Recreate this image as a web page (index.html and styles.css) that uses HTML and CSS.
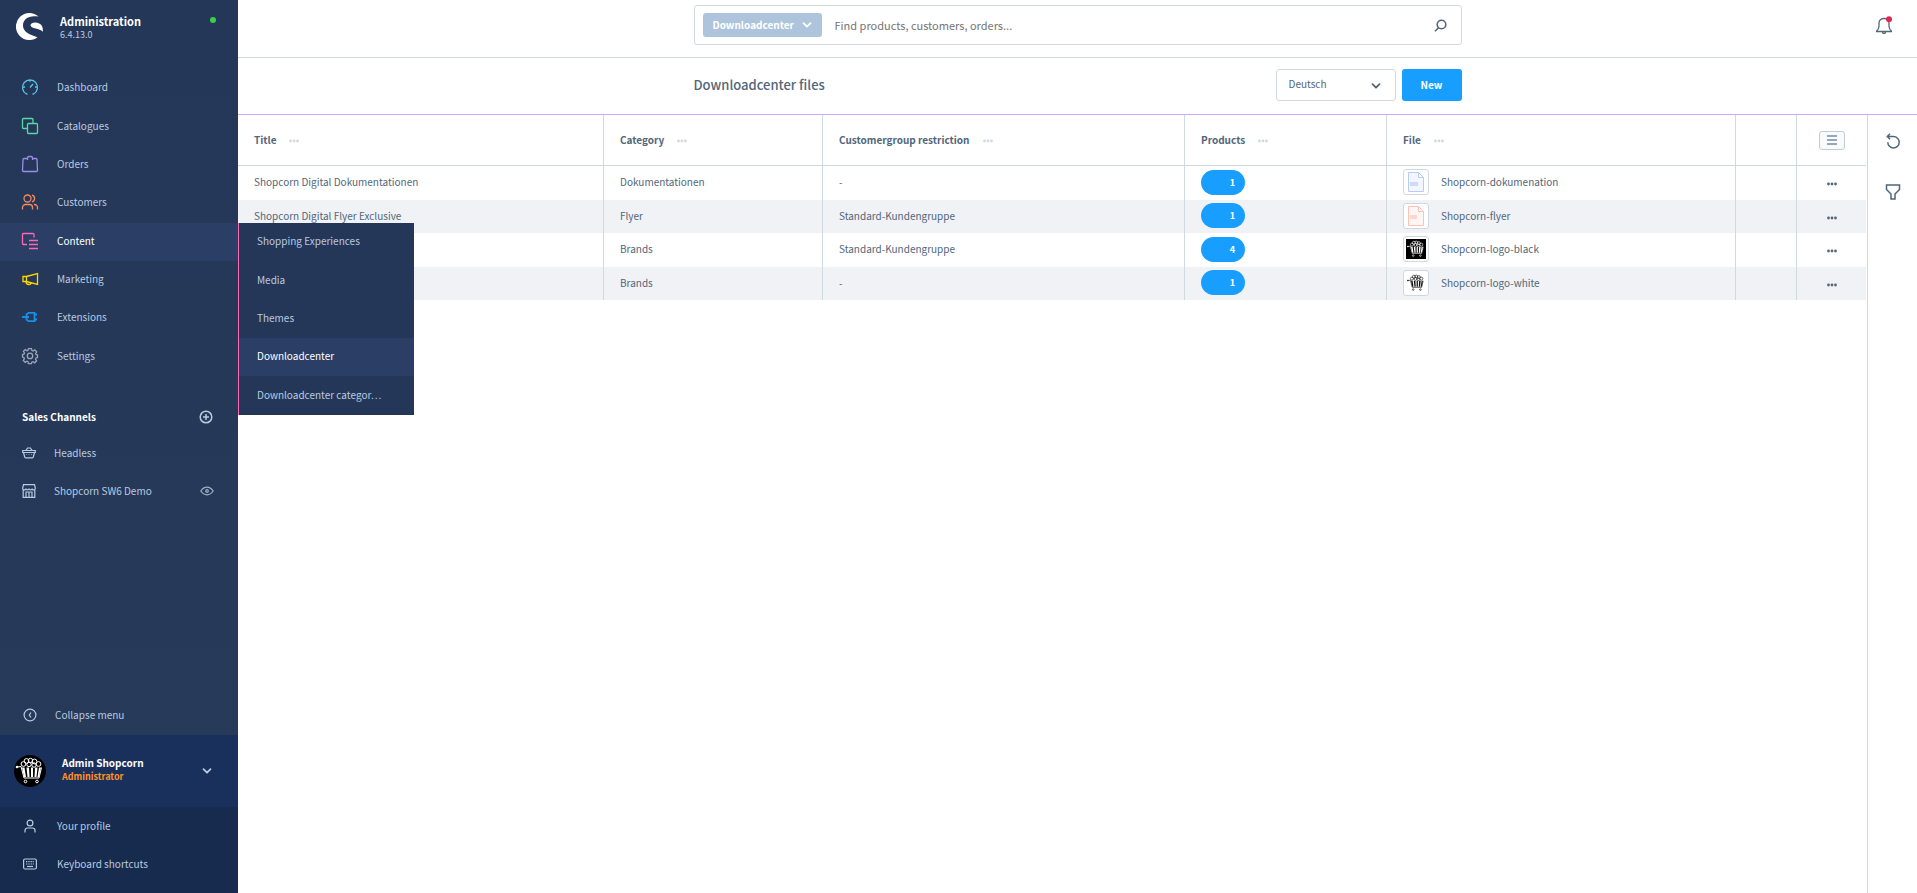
FILE: index.html
```html
<!DOCTYPE html>
<html lang="en">
<head>
<meta charset="utf-8">
<title>Downloadcenter files | Administration</title>
<link rel="stylesheet" href="styles.css">
</head>
<body>
<svg class="defs" aria-hidden="true">
  <symbol id="cart" viewBox="0 0 32 32">
    <g fill="none" stroke="currentColor" stroke-width="1">
      <circle cx="9.500" cy="9" r="2.400"/><circle cx="12.500" cy="6" r="2.400"/><circle cx="16.500" cy="5.500" r="2.200"/><circle cx="20.500" cy="6.500" r="2.400"/><circle cx="24.500" cy="9" r="2.400"/><circle cx="15" cy="9.500" r="2.200"/><circle cx="20" cy="10" r="2.200"/>
      <path d="M3 12l4-.5 3 11.500h15l2.500-10.500"/>
      <circle cx="11.500" cy="26.500" r="1.300"/><circle cx="23" cy="26.500" r="1.300"/>
    </g>
    <path d="M8 12.500h2.500l1.500 9.500h-2zM12.500 12.500h2.500l.5 9.500h-2zM17 12.500h2v9.500h-2zM21 12.500h2.500l-1 9.500h-2zM25 12.500h2l-2 9.500h-1.500z" fill="currentColor"/>
    <circle cx="3" cy="12" r="1.300" fill="currentColor"/>
  </symbol>
  <symbol id="chevron" viewBox="0 0 10 10"><path d="M1.500 3.200L5 6.700l3.500-3.500" fill="none" stroke="currentColor" stroke-width="1.800" stroke-linecap="round" stroke-linejoin="round"/></symbol>
  <symbol id="dots" viewBox="0 0 10 4"><g fill="currentColor"><circle cx="1.500" cy="2" r="1.400"/><circle cx="5" cy="2" r="1.400"/><circle cx="8.500" cy="2" r="1.400"/></g></symbol>
</svg>
<div class="app">
  <aside class="sidebar">
    <header class="brand">
      <svg class="brand-logo" viewBox="0 0 27 27"><path d="M22.500 3.600A13.500 13.500 0 1 0 21.400 24.400C18.500 22.600 7.200 21 7 12.500 6.900 6 13 1.800 22.500 3.600z" fill="#fff"/><path d="M14.500 12.300c0-3 5.500-3.800 9.200-1.600 2.600 1.500 3.600 4.500 3 8-2.700-3.300-12.200-3-12.200-6.400z" fill="#fff"/></svg>
      <div class="brand-text"><strong>Administration</strong><span>6.4.13.0</span></div>
      <i class="status"></i>
    </header>
    <nav class="menu">
      <a href="#"><svg viewBox="0 0 16 16" class="c-cyan"><path d="M5.500 15H4.500A7.500 7.500 0 1 1 11.500 15H10.500M8 .8v2M1 8h2M13 8h2M8 8.500L11 5"/></svg>Dashboard</a>
      <a href="#"><svg viewBox="0 0 16 16" class="c-green"><path d="M5.500 10.500h-4a1 1 0 0 1-1-1v-8a1 1 0 0 1 1-1h8.500a1 1 0 0 1 1 1v4"/><rect x="5.500" y="5.500" width="10" height="10" rx="1"/></svg>Catalogues</a>
      <a href="#"><svg viewBox="0 0 16 16" class="c-purple"><path d="M5.500 2.500h-3.500a1 1 0 0 0-1 1L.5 14.500a1 1 0 0 0 1 1h13a1 1 0 0 0 1-1L15 3.500a1 1 0 0 0-1-1h-3.500M5.500 4V2a1.500 1.500 0 0 1 1.500-1.500h2A1.500 1.500 0 0 1 10.500 2v2"/></svg>Orders</a>
      <a href="#"><svg viewBox="0 0 16 16" class="c-orange"><circle cx="5.500" cy="4.500" r="3.500"/><path d="M.5 15.500v-2a3 3 0 0 1 3-3h4a3 3 0 0 1 3 3v2M10 1.200a3.400 3.400 0 0 1 0 6.600M12 10.500h.5a3 3 0 0 1 3 3v2"/></svg>Customers</a>
      <a href="#" class="active"><svg viewBox="0 0 16 16" class="c-pink"><path d="M5 11.500H1.500a1 1 0 0 1-1-1v-9a1 1 0 0 1 1-1H11a1 1 0 0 1 1 1v3M7 7.500h9M7 11.500h9M7 15.500h9"/></svg>Content</a>
      <a href="#"><svg viewBox="0 0 16 16" class="c-yellow"><path d="M1 5.500h3.500L15.500 2.500v11L4.500 10.500H1zM4.500 5.500v5M4 10.500c0 2 1 3 3 3 1 0 2-.7 2-1.700"/></svg>Marketing</a>
      <a href="#"><svg viewBox="0 0 16 16" class="c-blue"><path d="M0 8h6M12 5.500h3M12 10.500h3M4.500 8h2.500" stroke-width="1.800"/><path d="M12.500 3.800H6.500L4.500 5.500v5L6.500 12.200h6z" stroke-width="1.800"/></svg>Extensions</a>
      <a href="#"><svg viewBox="0 0 16 16" class="c-grey"><path d="M6.500.6h3l.4 1.900 1.200.5 1.700-1.100 1.900 1.900-1.100 1.700.5 1.100 1.400.4v2.500l-1.500.5-.5 1.200 1.100 1.700-1.900 1.900-1.700-1.100-1.200.5-.3 1.400H6.400L6 13.700l-1.100-.5-1.700 1.100-1.900-1.900 1.100-1.700-.5-1.200L.5 9V6.500l1.500-.4.500-1.100-1.100-1.700L3.200 1.600l1.700 1.100L6 2.200z"/><circle cx="8" cy="7.900" r="2.700"/></svg>Settings</a>
      <div class="flyout">
        <a href="#">Shopping Experiences</a>
        <a href="#">Media</a>
        <a href="#">Themes</a>
        <a href="#" class="active">Downloadcenter</a>
        <a href="#">Downloadcenter categor…</a>
      </div>
    </nav>
    <section class="channels">
      <div class="channels-head"><h2>Sales Channels</h2><button type="button" aria-label="Add sales channel"><svg viewBox="0 0 14 14"><circle cx="7" cy="7" r="5.800"/><path d="M7 4v6M4 7h6"/></svg></button></div>
      <a href="#"><svg viewBox="0 0 14 14"><path d="M.7 4.500h12.600v2H.7zM1.500 6.500l1.200 4.500a1 1 0 0 0 1 .8h6.600a1 1 0 0 0 1-.8l1.200-4.500M4 4.500l1.500-2.500h3L10 4.500M4.500 8.500h.6M6.700 8.500h.6M9 8.500h.6"/></svg>Headless</a>
      <a href="#"><svg viewBox="0 0 14 14"><path d="M1.200 6v7.300h11.600V6M1.500.7h11l.8 3.300a1.600 1.600 0 0 1-3.200.6 1.600 1.600 0 0 1-3.100 0 1.600 1.600 0 0 1-3.100 0A1.600 1.600 0 0 1 .7 4zM4 13V8h6V13M7 8V13"/></svg>Shopcorn SW6 Demo<svg class="eye" viewBox="0 0 14 14"><path d="M.8 7C2.500 4.500 4.500 3.200 7 3.200S11.500 4.500 13.200 7C11.500 9.500 9.500 10.800 7 10.800S2.500 9.500.8 7z"/><circle cx="7" cy="7" r="1.300"/></svg></a>
    </section>
    <button type="button" class="collapse"><svg viewBox="0 0 14 14"><circle cx="7" cy="7" r="5.900"/><path d="M8 4.500L6.300 7 8 9.500"/></svg>Collapse menu</button>
    <button type="button" class="user"><span class="avatar"><svg><use href="#cart"/></svg></span><span class="user-text"><strong>Admin Shopcorn</strong><em>Administrator</em></span><svg class="user-chevron"><use href="#chevron"/></svg></button>
    <nav class="user-menu">
      <a href="#"><svg viewBox="0 0 14 14"><circle cx="7" cy="4" r="2.900"/><path d="M2 13.500v-2a2.500 2.500 0 0 1 2.500-2.500h5a2.500 2.500 0 0 1 2.500 2.500v2"/></svg>Your profile</a>
      <a href="#"><svg viewBox="0 0 14 14"><rect x=".6" y="2" width="12.800" height="10" rx="1.500"/><path d="M3 4.700h8M3 7h8" stroke-dasharray="1 .7"/><path d="M4 9.500h6"/></svg>Keyboard shortcuts</a>
    </nav>
  </aside>
  <div class="desktop">
    <header class="topbar">
      <div class="search">
        <button type="button" class="scope">Downloadcenter<svg><use href="#chevron"/></svg></button>
        <input type="text" aria-label="Search" placeholder="Find products, customers, orders...">
        <svg class="search-icon" viewBox="0 0 13 13"><circle cx="7.500" cy="5.500" r="4.300"/><path d="M4.500 8.700L1 12.200"/></svg>
      </div>
      <button type="button" class="bell" aria-label="Notifications"><svg viewBox="0 0 18 18"><path d="M1 15.500h16M1.500 15c2-1.500 2.500-3 2.500-5V7a4.500 4.500 0 0 1 4.500-4.500h1A4.500 4.500 0 0 1 14 7v3c0 2 .5 3.500 2.500 5M7.500 16a1.500 1.500 0 0 0 3 0" fill="none" stroke="#52667a" stroke-width="1.300"/><circle cx="14" cy="3.300" r="3" fill="#de294c"/></svg></button>
    </header>
    <header class="pagebar">
      <div class="pagebar-inner">
        <h1>Downloadcenter files</h1>
        <label class="language"><select aria-label="Language"><option>Deutsch</option></select><svg><use href="#chevron"/></svg></label>
        <button type="button" class="primary">New</button>
      </div>
    </header>
    <div class="content">
      <main class="grid-wrap">
        <table class="grid">
          <colgroup><col class="w-title"><col class="w-category"><col class="w-group"><col class="w-products"><col class="w-file"><col class="w-empty"><col class="w-actions"></colgroup>
          <thead>
            <tr>
              <th>Title<svg class="dots"><use href="#dots"/></svg></th>
              <th>Category<svg class="dots"><use href="#dots"/></svg></th>
              <th>Customergroup restriction<svg class="dots"><use href="#dots"/></svg></th>
              <th>Products<svg class="dots"><use href="#dots"/></svg></th>
              <th>File<svg class="dots"><use href="#dots"/></svg></th>
              <th></th>
              <th class="actions"><button type="button" class="columns" aria-label="Columns"><svg viewBox="0 0 10 10"><path d="M0 1h10M0 5h10M0 9h10" stroke="#758ca3" stroke-width="1.300"/></svg></button></th>
            </tr>
          </thead>
          <tbody>
            <tr>
              <td>Shopcorn Digital Dokumentationen</td><td>Dokumentationen</td><td>-</td><td><span class="badge">1</span></td>
              <td><div class="file"><span class="thumb"><svg class="doc" viewBox="0 0 16 20"><path d="M.5.500h10l5 5v14H.5zM10.500.5v5h5"/><rect x="2" y="10" width="8" height="4"/></svg></span>Shopcorn-dokumenation</div></td>
              <td></td><td class="actions"><button type="button" aria-label="Row actions"><svg class="dots"><use href="#dots"/></svg></button></td>
            </tr>
            <tr>
              <td>Shopcorn Digital Flyer Exclusive</td><td>Flyer</td><td>Standard-Kundengruppe</td><td><span class="badge">1</span></td>
              <td><div class="file"><span class="thumb"><svg class="doc pdf" viewBox="0 0 16 20"><path d="M.5.500h10l5 5v14H.5zM10.500.5v5h5"/><rect x="2" y="9" width="7" height="4"/></svg></span>Shopcorn-flyer</div></td>
              <td></td><td class="actions"><button type="button" aria-label="Row actions"><svg class="dots"><use href="#dots"/></svg></button></td>
            </tr>
            <tr>
              <td></td><td>Brands</td><td>Standard-Kundengruppe</td><td><span class="badge">4</span></td>
              <td><div class="file"><span class="thumb"><svg class="logo dark"><use href="#cart"/></svg></span>Shopcorn-logo-black</div></td>
              <td></td><td class="actions"><button type="button" aria-label="Row actions"><svg class="dots"><use href="#dots"/></svg></button></td>
            </tr>
            <tr>
              <td></td><td>Brands</td><td>-</td><td><span class="badge">1</span></td>
              <td><div class="file"><span class="thumb"><svg class="logo"><use href="#cart"/></svg></span>Shopcorn-logo-white</div></td>
              <td></td><td class="actions"><button type="button" aria-label="Row actions"><svg class="dots"><use href="#dots"/></svg></button></td>
            </tr>
          </tbody>
        </table>
      </main>
      <aside class="tools">
        <button type="button" aria-label="Refresh"><svg viewBox="0 0 16 16"><path d="M2.500 3.500h6a5.700 5.700 0 1 1-5.700 5.700M5 .8L2.300 3.500 5 6.200"/></svg></button>
        <button type="button" aria-label="Filter"><svg viewBox="0 0 16 16"><path d="M1.500 1h13v4.500L10 10v5H6v-5L1.500 5.500z"/></svg></button>
      </aside>
    </div>
  </div>
</div>
</body>
</html>
```
FILE: styles.css
```css
* { box-sizing: border-box; }
body, h1, h2 { margin: 0; }
body, button, input, select {
  font-family: "Noto Sans CJK SC", "Noto Sans", sans-serif;
  font-size: 10px;
  line-height: 16px;
}
body { color: #52667a; background: #fff; }
button { padding: 0; border: 0; background: none; color: inherit; cursor: pointer; }
a { color: inherit; text-decoration: none; }
.defs { position: absolute; width: 0; height: 0; }
.app { display: flex; min-height: 100vh; }

.sidebar {
  display: flex;
  flex-direction: column;
  flex: 0 0 238px;
  background: linear-gradient(#243758, #273a58);
  color: #b9cbe0;
}
.brand { display: flex; align-items: flex-start; gap: 17px; padding: 13px 22px 0 16px; height: 69px; }
.brand-logo { width: 27px; height: 27px; }
.brand-text { display: flex; flex-direction: column; flex: 1; }
.brand-text strong { font-size: 11px; color: #fff; }
.brand-text span { font-size: 9px; line-height: 12px; }
.status { width: 6px; height: 6px; margin-top: 4px; border-radius: 50%; background: #37d046; }

.menu { position: relative; display: flex; flex-direction: column; height: 307px; }
.menu > a { flex: 1; display: flex; align-items: center; gap: 19px; padding: 0 0 2px 22px; }
.menu svg { width: 16px; height: 16px; fill: none; stroke: currentColor; stroke-width: 1.3; overflow: visible; }
.menu a.active { background: #2b3f66; color: #fff; }
.menu .c-cyan { color: #5cc8e8; }
.menu .c-green { color: #57d9a3; }
.menu .c-purple { color: #9a8cf0; }
.menu .c-orange { color: #f88962; }
.menu .c-pink { color: #ff68b4; }
.menu .c-yellow { color: #ffd700; }
.menu .c-blue { color: #1b8ee6; }
.menu .c-grey { color: #9aa8b5; }
.flyout {
  position: absolute;
  z-index: 2;
  top: 50%;
  left: 100%;
  display: flex;
  flex-direction: column;
  width: 176px;
  height: 192px;
  border-left: 1px solid #ff68b4;
  background: #243758;
}
.flyout a { flex: 1; display: flex; align-items: center; padding: 0 0 1px 18px; }

.channels { display: flex; flex-direction: column; padding: 22px 24px 0 22px; }
.channels svg, .collapse svg, .user-menu svg { width: 14px; height: 14px; fill: none; stroke: currentColor; stroke-width: 1.2; }
.channels-head { display: flex; align-items: center; justify-content: space-between; height: 38px; padding-right: 1px; }
.channels-head h2 { font-size: 10px; color: #fff; }
.channels-head button { display: flex; }
.channels .channels-head svg { stroke-width: 1.5; }
.channels a { display: flex; align-items: center; gap: 18px; height: 38px; margin-top: -2px; }
.channels a + a { margin-top: 0; }
.channels .eye { margin-left: auto; color: #9fb2c8; }
.collapse { display: flex; align-items: center; gap: 18px; height: 40px; margin-top: auto; padding-left: 23px; }
.user { display: flex; align-items: center; gap: 16px; height: 72px; padding: 0 26px 0 14px; background: #1a305c; text-align: left; }
.avatar { width: 32px; height: 32px; border-radius: 50%; background: #000; color: #fff; }
.avatar svg { display: block; width: 32px; height: 32px; }
.user-text { display: flex; flex-direction: column; flex: 1; padding-bottom: 2px; }
.user-text strong { line-height: 14px; font-size: 10px; color: #fff; }
.user-text em { font-style: normal; font-weight: 700; font-size: 9px; line-height: 14px; color: #ff9127; }
.user-chevron { width: 10px; height: 10px; }
.user-menu { padding-bottom: 10px; background: #172b4e; }
.user-menu a { display: flex; align-items: center; gap: 20px; height: 38px; padding-left: 23px; }

.desktop { flex: 1; min-width: 0; display: flex; flex-direction: column; }
.topbar { position: relative; display: flex; justify-content: center; padding-top: 5px; height: 58px; border-bottom: 1px solid #d1d9e0; }
.search { display: flex; align-items: center; width: 768px; height: 40px; padding: 0 14px 0 8px; border: 1px solid #d1d9e0; border-radius: 3px; }
.scope { display: flex; align-items: center; justify-content: space-between; width: 119px; height: 24px; padding: 0 10px; margin-bottom: 1px; border-radius: 3px; background: #aec4dc; color: #fff; font-weight: 700; }
.scope svg { width: 10px; height: 10px; }
.search input { flex: 1; border: 0; outline: 0; padding: 0 13px; font-size: 11px; }
.search input::placeholder { color: #757575; }
.search-icon { width: 13px; height: 13px; fill: none; stroke: #52667a; stroke-width: 1.600; }
.bell { position: absolute; top: 16px; right: 24px; }
.bell svg { display: block; width: 18px; height: 18px; }

.pagebar { display: flex; justify-content: center; height: 57px; padding-bottom: 2px; border-bottom: 1px solid #c9aaf7; }
.pagebar-inner { display: flex; align-items: center; width: 768px; gap: 6px; }
.pagebar h1 { flex: 1; font-size: 13px; font-weight: 500; line-height: 20px; }
.language { position: relative; }
.language select { display: block; appearance: none; width: 120px; height: 32px; padding: 0 12px 2px; border: 1px solid #d1d9e0; border-radius: 3px; background: #fff; color: #52667a; }
.language svg { position: absolute; right: 15px; top: 12px; width: 10px; height: 10px; pointer-events: none; }
.primary { width: 60px; height: 32px; border-radius: 3px; background: #189eff; color: #fff; font-weight: 700; }

.content { flex: 1; display: flex; }
.grid-wrap { flex: 1; padding-right: 1px; }
.grid { width: 100%; table-layout: fixed; border-collapse: separate; border-spacing: 0; }
.w-title { width: 366px; }
.w-category { width: 219px; }
.w-group { width: 362px; }
.w-products { width: 202px; }
.w-file { width: 349px; }
.w-empty { width: 61px; }
.w-actions { width: 69px; }
.grid th, .grid td { padding: 0 16px; border-right: 1px solid #d1d9e0; text-align: left; }
.grid th { height: 51px; border-bottom: 1px solid #d1d9e0; }
.grid td { height: 34px; padding-bottom: 2px; }
.grid tbody tr:nth-child(even) { background: #f0f2f5; }
.grid tbody tr:nth-child(even) td { height: 33px; }
.grid .actions { padding: 0; border-right: 0; text-align: center; }
.dots { width: 10px; height: 4px; vertical-align: middle; }
th .dots { margin-left: 13px; color: #d1d9e0; }
.columns { display: block; width: 26px; height: 19px; margin: 0 auto; border: 1px solid #c2ccd8; border-radius: 3px; background: #f9fafb; }
.columns svg { display: block; width: 10px; height: 10px; margin: 0 auto; }
.badge { display: block; width: 44px; height: 25px; padding-right: 10px; border-radius: 13px; background: #189eff; color: #fff; font-size: 9px; font-weight: 700; line-height: 25px; text-align: right; }
.file { display: flex; align-items: center; gap: 12px; }
.thumb { display: flex; align-items: center; justify-content: center; width: 26px; height: 26px; border: 1px solid #d1d9e0; border-radius: 3px; background: #fff; }
.doc { width: 16px; height: 20px; fill: #f3f6fe; stroke: #b9cbf8; stroke-width: 1; }
.doc rect { fill: #cfdaf8; stroke: none; }
.doc.pdf { fill: #fff5f3; stroke: #ffc0b8; }
.doc.pdf rect { fill: #ffd6d0; }
.logo { width: 20px; height: 20px; color: #111; }
.logo.dark { background: #000; color: #fff; }

.tools { display: flex; flex-direction: column; align-items: center; gap: 35px; flex: 0 0 50px; padding-top: 18px; border-left: 1px solid #d1d9e0; }
.tools svg { display: block; width: 16px; height: 16px; fill: none; stroke: #52667a; stroke-width: 1.500; }
```
